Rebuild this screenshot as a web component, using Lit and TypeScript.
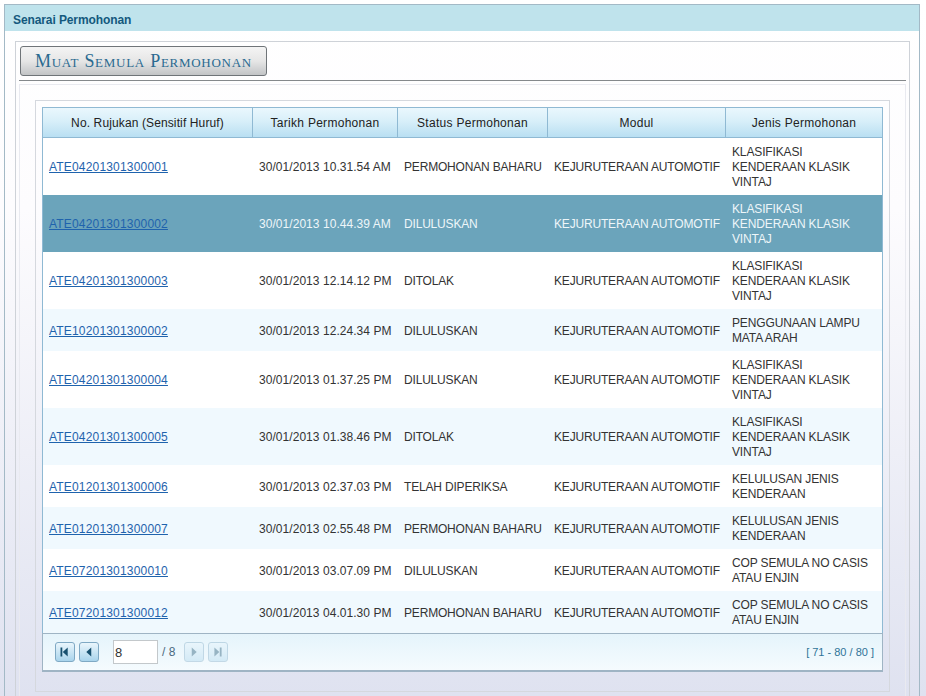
import { LitElement, html, css, svg } from "lit";
import { customElement } from "lit/decorators.js";

const K = "KLASIFIKASI KENDERAAN KLASIK VINTAJ";
const L = "KELULUSAN JENIS KENDERAAN";
const C = "COP SEMULA NO CASIS ATAU ENJIN";
const rows = [
  ["ATE04201301300001", "30/01/2013 10.31.54 AM", "PERMOHONAN BAHARU", K],
  ["ATE04201301300002", "30/01/2013 10.44.39 AM", "DILULUSKAN", K],
  ["ATE04201301300003", "30/01/2013 12.14.12 PM", "DITOLAK", K],
  ["ATE10201301300002", "30/01/2013 12.24.34 PM", "DILULUSKAN", "PENGGUNAAN LAMPU MATA ARAH"],
  ["ATE04201301300004", "30/01/2013 01.37.25 PM", "DILULUSKAN", K],
  ["ATE04201301300005", "30/01/2013 01.38.46 PM", "DITOLAK", K],
  ["ATE01201301300006", "30/01/2013 02.37.03 PM", "TELAH DIPERIKSA", L],
  ["ATE01201301300007", "30/01/2013 02.55.48 PM", "PERMOHONAN BAHARU", L],
  ["ATE07201301300010", "30/01/2013 03.07.09 PM", "DILULUSKAN", C],
  ["ATE07201301300012", "30/01/2013 04.01.30 PM", "PERMOHONAN BAHARU", C],
];
const heads = ["No. Rujukan (Sensitif Huruf)", "Tarikh Permohonan", "Status Permohonan", "Modul", "Jenis Permohonan"];

const icons = {
  first: svg`<path d="M5 5h2v10H5zM13 5v10L7.500 10z"/>`,
  prev: svg`<path d="M12.500 5v10L7 10z"/>`,
  next: svg`<path d="M7.500 5v10l5.500-5z"/>`,
  last: svg`<path d="M6 5v10l5.500-5zM12 5h2v10h-2z"/>`,
};

@customElement("app-root")
export class AppRoot extends LitElement {
  static styles = css`
    :host {
      display: block;
      width: 926px;
      height: 696px;
      overflow: hidden;
      box-sizing: border-box;
      padding: 4px 6px 0 4px;
      font-family: "Liberation Sans", Arial, sans-serif;
      font-size: 12px;
      color: #333;
      background: linear-gradient(#ffffff 0%, #fdfcfe 30%, #dfe2f0 100%);
    }
    * { box-sizing: border-box; }
    .outer {
      height: 692px;
      border: 1px solid #a3b9c6;
      border-bottom: none;
      display: flex;
      flex-direction: column;
    }
    .title {
      flex: none;
      height: 26px;
      background: #bfe3ec;
      color: #14597d;
      font-weight: bold;
      font-size: 12px;
      letter-spacing: -0.1px;
      line-height: 30px;
      padding-left: 8px;
    }
    .body {
      flex: 1;
      min-height: 0;
      padding: 10px 9px 0 10px;
    }
    .panel {
      height: 100%;
      border: 1px solid #ced2d8;
      border-bottom: none;
      padding: 0 3px;
      display: flex;
      flex-direction: column;
    }
    .reload {
      flex: none;
      width: 247px;
      height: 30px;
      margin: 4px 0 4px 1px;
      padding: 0 0 0 14px;
      border: 1px solid #6f7478;
      border-radius: 3px;
      background: linear-gradient(#f4f4f4 0%, #e6e6e6 50%, #c2c4c6 100%);
      color: #2a6a90;
      font-family: "Liberation Serif", "Times New Roman", serif;
      font-variant: small-caps;
      font-size: 18px;
      letter-spacing: 0.72px;
      line-height: 28px;
      text-align: left;
      white-space: nowrap;
    }
    .rule {
      flex: none;
      height: 1px;
      background: #85898c;
    }
    .inset {
      flex: 1;
      min-height: 0;
      margin-top: 3px;
      border: 1px solid #e9eaf0;
      border-bottom: none;
      padding: 15px 15px 0 15px;
    }
    .frame {
      height: 592px;
      border: 1px solid #d5d8de;
      padding: 6px 5px 0 6px;
    }
    table {
      width: 841px;
      border-collapse: separate;
      border-spacing: 0;
      table-layout: fixed;
      border: 1px solid #8fb9d3;
      border-bottom: none;
    }
    th {
      height: 30px;
      padding: 0 4px;
      font-weight: normal;
      font-size: 12px;
      letter-spacing: 0.28px;
      color: #222;
      text-align: center;
      white-space: nowrap;
      background: linear-gradient(#eaf7fd 0%, #d8eff9 45%, #b9dff2 100%);
      border-right: 1px solid #8fb9d3;
      border-bottom: 1px solid #8fb9d3;
    }
    th:first-child { letter-spacing: 0.12px; }
    th:last-child, td:last-child { border-right: none; }
    td {
      padding: 7px 6px 5px;
      line-height: 15px;
      color: #333;
      background: #fff;
      vertical-align: middle;
      white-space: nowrap;
      letter-spacing: -0.18px;
    }
    td.date { letter-spacing: 0.05px; }
    td.wrap { white-space: normal; letter-spacing: -0.14px; }
    tr.alt td { background: #f0f9fe; }
    tr.sel td { background: #6ba4bb; color: #eef6f9; }
    a {
      color: #1f63ad;
      letter-spacing: 0.18px;
      text-decoration: underline;
      cursor: pointer;
    }
    .pager {
      width: 841px;
      height: 39px;
      display: flex;
      align-items: center;
      padding: 0 8px 0 12px;
      border: 1px solid #9fb4c4;
      border-bottom-width: 2px;
      background: linear-gradient(#e5f4fb, #f5fbfe);
    }
    .pg {
      width: 20px;
      height: 20px;
      padding: 0;
      margin-right: 4px;
      border: 1px solid #7fa9c4;
      border-radius: 3px;
      background: linear-gradient(#eaf6fc, #a9d4ec);
      display: flex;
      align-items: center;
      justify-content: center;
    }
    .pg svg { width: 18px; height: 18px; fill: #17506f; display: block; }
    .pg[disabled] { opacity: 0.4; }
    input {
      width: 45px;
      height: 24px;
      margin-left: 10px;
      padding: 1px 0 0 1px;
      border: 1px solid #c3c8cb;
      background: #fff;
      font: 13px "Liberation Sans", Arial, sans-serif;
      color: #333;
      outline: none;
    }
    .of {
      margin: 0 9px 0 4px;
      color: #4a6a80;
      width: 13px;
      white-space: nowrap;
    }
    .range {
      margin-left: auto;
      color: #2f7398;
      font-size: 11px;
      white-space: nowrap;
    }
  `;

  private btn(name: keyof typeof icons, off = false) {
    return html`<button class="pg" ?disabled=${off} aria-label=${name}>
      <svg viewBox="0 0 20 20">${icons[name]}</svg>
    </button>`;
  }

  render() {
    return html`
      <div class="outer">
        <div class="title">Senarai Permohonan</div>
        <div class="body">
          <div class="panel">
            <button class="reload">Muat Semula Permohonan</button>
            <div class="rule"></div>
            <div class="inset">
              <div class="frame">
                <table>
                  <colgroup>
                    <col style="width:210px" /><col style="width:145px" /><col style="width:150px" /><col style="width:178px" /><col />
                  </colgroup>
                  <thead>
                    <tr>${heads.map((h) => html`<th>${h}</th>`)}</tr>
                  </thead>
                  <tbody>
                    ${rows.map(
                      (r, i) => html`<tr class=${i === 1 ? "sel" : i % 2 === 1 ? "alt" : ""}>
                        <td><a>${r[0]}</a></td>
                        <td class="date">${r[1]}</td>
                        <td>${r[2]}</td>
                        <td>KEJURUTERAAN AUTOMOTIF</td>
                        <td class="wrap">${r[3]}</td>
                      </tr>`
                    )}
                  </tbody>
                </table>
                <div class="pager">
                  ${this.btn("first")}${this.btn("prev")}
                  <input .value=${"8"} />
                  <span class="of">/ 8</span>
                  ${this.btn("next", true)}${this.btn("last", true)}
                  <span class="range">[ 71 - 80 / 80 ]</span>
                </div>
              </div>
            </div>
          </div>
        </div>
      </div>
    `;
  }
}
